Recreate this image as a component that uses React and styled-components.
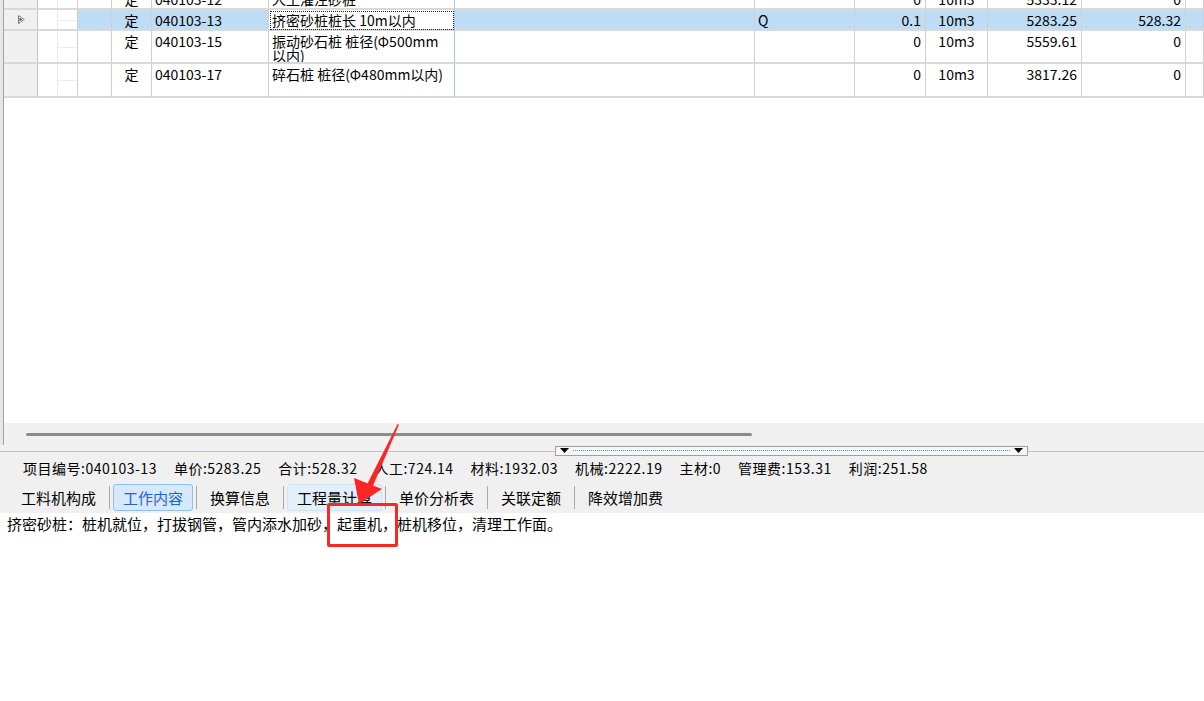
import React from "react";
import styled, { createGlobalStyle, css } from "styled-components";

const GlobalStyle = createGlobalStyle`
  html, body { margin: 0; padding: 0; }
  body {
    background: #f0f0f0;
    font-family: "Noto Sans CJK SC", "Noto Sans", sans-serif;
    color: #000;
    overflow: hidden;
  }
  * { box-sizing: border-box; }
`;

const COLS = "34px 40px 34px 40px 117px 186px 300px 100px 71px 62px 94px 104px 1fr";

const Page = styled.div`
  position: relative;
  width: 1204px;
  height: 701px;
  display: flex;
  flex-direction: column;
  overflow: hidden;
`;

const UpperPanel = styled.div`
  flex: none;
  height: 445px;
  display: flex;
  background: #e6e6e6;
  padding-left: 3px;
`;

const UpperInner = styled.div`
  flex: 1;
  min-width: 0;
  border-left: 1px solid #a3a3a3;
  display: flex;
  flex-direction: column;
`;

const GridViewport = styled.div`
  flex: 1;
  background: #fff;
  overflow: hidden;
`;

const GridBody = styled.div`
  margin-top: -11px;
`;

const GridRow = styled.div`
  display: grid;
  grid-template-columns: ${COLS};
  height: ${(p) => p.$h}px;
  font-size: 14px;
  line-height: 14px;
`;

const baseCell = css`
  border-right: 1px solid #d0d0d0;
  border-bottom: 2px solid #d9d9d9;
  padding-top: 3px;
  white-space: nowrap;
  overflow: hidden;
`;

const HeaderCell = styled.div`
  ${baseCell}
  background: #f0f0f0;
  border-right-color: #c4c4c4;
  display: flex;
  align-items: center;
  padding: 0 0 0 14px;
`;

const TreeCell = styled.div`
  ${baseCell}
  position: relative;
  background: #fff;
  &::before {
    content: "";
    position: absolute;
    left: 19px;
    top: 0;
    bottom: -2px;
    width: 1px;
    background: #ececec;
  }
  &::after {
    content: "";
    position: absolute;
    left: 20px;
    right: 0;
    top: 50%;
    height: 1px;
    background: #ececec;
  }
`;

const Cell = styled.div`
  ${baseCell}
  background: ${(p) => (p.$selected ? "#bfdcf5" : "#fff")};
  text-align: ${(p) => p.$align || "left"};
  padding-left: ${(p) => (p.$align === "right" ? 0 : p.$align === "center" ? 0 : 3)}px;
  padding-right: ${(p) => (p.$align === "right" ? 4 : 0)}px;
  ${(p) =>
    p.$blueEdge &&
    css`
      border-right-color: #a6c7ec;
    `}
  ${(p) =>
    p.$focus &&
    css`
      outline: 1px dotted #222;
      outline-offset: -2px;
      background: #fff;
    `}
`;

const NameLine = styled.div`
  white-space: nowrap;
`;

const HScroll = styled.div`
  flex: none;
  height: 22px;
  background: #f0f0f0;
  display: flex;
  align-items: center;
  padding-left: 22px;
`;

const Thumb = styled.div`
  width: 726px;
  height: 3px;
  border-radius: 2px;
  background: #8b8b8b;
`;

const Splitter = styled.div`
  flex: none;
  height: 11px;
  display: flex;
  align-items: center;
  background: linear-gradient(
    to bottom,
    transparent 0,
    transparent 6px,
    #a9c8ea 6px,
    #a9c8ea 7px,
    transparent 7px
  );
`;

const SplitBox = styled.div`
  margin-left: 555px;
  width: 473px;
  height: 10px;
  border: 1px solid #a0a0a0;
  background: #f7f7f7;
  display: flex;
  align-items: center;
  gap: 4px;
  padding: 0 4px;
`;

const Dots = styled.div`
  flex: 1;
  height: 0;
  border-top: 1px dotted #5b97dc;
`;

const InfoBar = styled.div`
  flex: none;
  height: 23px;
  display: flex;
  align-items: center;
  gap: 17px;
  padding-left: 23px;
  font-size: 14px;
  letter-spacing: 0.5px;
  white-space: nowrap;
`;

const TabBar = styled.div`
  flex: none;
  height: 34px;
  display: flex;
  align-items: stretch;
  padding: 5px 0 2px 11px;
`;

const Tab = styled.div`
  display: flex;
  align-items: center;
  padding: 0 9px;
  border: 1px solid transparent;
  border-radius: 3px;
  font-size: 15px;
  white-space: nowrap;
  ${(p) =>
    p.$active &&
    css`
      background: #d6e9fb;
      border-color: #8fbfee;
      color: #1d63d4;
    `}
  ${(p) =>
    p.$hover &&
    css`
      background: #e3effa;
      border-color: #cfe3f6;
    `}
`;

const TabSep = styled.div`
  width: 1px;
  background: #a9a9a9;
  margin: 2px 3px;
`;

const Content = styled.div`
  flex: 1;
  background: #fff;
  padding: 2px 0 0 7px;
  font-size: 15px;
  line-height: 17px;
  white-space: nowrap;
`;

const RedBox = styled.div`
  position: absolute;
  left: 327px;
  top: 503px;
  width: 71px;
  height: 44px;
  border: 3px solid #fb2626;
  border-radius: 2px;
  pointer-events: none;
`;

const Overlay = styled.svg`
  position: absolute;
  left: 0;
  top: 0;
  pointer-events: none;
`;

const rows = [
  { type: "定", code: "040103-12", name: ["人工灌注砂桩"], expr: "", qty: "0", unit: "10m3", price: "5333.12", total: "0", h: 21 },
  { type: "定", code: "040103-13", name: ["挤密砂桩桩长 10m以内"], expr: "Q", qty: "0.1", unit: "10m3", price: "5283.25", total: "528.32", h: 21, selected: true },
  { type: "定", code: "040103-15", name: ["振动砂石桩 桩径(Φ500mm", "以内)"], expr: "", qty: "0", unit: "10m3", price: "5559.61", total: "0", h: 33 },
  { type: "定", code: "040103-17", name: ["碎石桩 桩径(Φ480mm以内)"], expr: "", qty: "0", unit: "10m3", price: "3817.26", total: "0", h: 34 },
];

const info = [
  "项目编号:040103-13",
  "单价:5283.25",
  "合计:528.32",
  "人工:724.14",
  "材料:1932.03",
  "机械:2222.19",
  "主材:0",
  "管理费:153.31",
  "利润:251.58",
];

const tabs = ["工料机构成", "工作内容", "换算信息", "工程量计算", "单价分析表", "关联定额", "降效增加费"];

const RowPointer = () => (
  <svg width="7" height="9" viewBox="0 0 7 9">
    <polygon points="0.5,0.5 6.2,4.5 0.5,8.5" fill="#fff" stroke="#333" strokeWidth="1" strokeDasharray="1.2 0.8" />
    <polygon points="1.5,2.5 4.5,4.5 1.5,6.5" fill="#555" />
  </svg>
);

const Tri = () => (
  <svg width="9" height="5" viewBox="0 0 9 5">
    <polygon points="0,0 9,0 4.5,5" fill="#000" />
  </svg>
);

export default function App() {
  return (
    <Page>
      <GlobalStyle />
      <UpperPanel>
        <UpperInner>
          <GridViewport>
            <GridBody>
              {rows.map((r, i) => (
                <GridRow key={i} $h={r.h}>
                  <HeaderCell>{r.selected ? <RowPointer /> : null}</HeaderCell>
                  <TreeCell />
                  <Cell $selected={r.selected} />
                  <Cell $selected={r.selected} $align="center">{r.type}</Cell>
                  <Cell $selected={r.selected}>{r.code}</Cell>
                  <Cell $selected={r.selected} $focus={r.selected} $blueEdge>
                    {r.name.map((l, j) => (
                      <NameLine key={j}>{l}</NameLine>
                    ))}
                  </Cell>
                  <Cell $selected={r.selected} />
                  <Cell $selected={r.selected}>{r.expr}</Cell>
                  <Cell $selected={r.selected} $align="right">{r.qty}</Cell>
                  <Cell $selected={r.selected} $align="center">{r.unit}</Cell>
                  <Cell $selected={r.selected} $align="right">{r.price}</Cell>
                  <Cell $selected={r.selected} $align="right">{r.total}</Cell>
                  <Cell $selected={r.selected} />
                </GridRow>
              ))}
            </GridBody>
          </GridViewport>
          <HScroll>
            <Thumb />
          </HScroll>
        </UpperInner>
      </UpperPanel>
      <Splitter>
        <SplitBox>
          <Tri />
          <Dots />
          <Tri />
        </SplitBox>
      </Splitter>
      <InfoBar>
        {info.map((t) => (
          <span key={t}>{t}</span>
        ))}
      </InfoBar>
      <TabBar>
        {tabs.map((t, i) => (
          <React.Fragment key={t}>
            {i > 0 && <TabSep />}
            <Tab $active={t === "工作内容"} $hover={t === "工程量计算"}>
              {t}
            </Tab>
          </React.Fragment>
        ))}
      </TabBar>
      <Content>挤密砂桩：桩机就位，打拔钢管，管内添水加砂，起重机，桩机移位，清理工作面。</Content>
      <RedBox />
      <Overlay width="1204" height="701" viewBox="0 0 1204 701">
        <polygon points="397.6,424 399,424.6 372.5,487 367,484.5" fill="#fb2626" />
        <polygon points="359,504 354,478 382,489" fill="#fb2626" />
      </Overlay>
    </Page>
  );
}
